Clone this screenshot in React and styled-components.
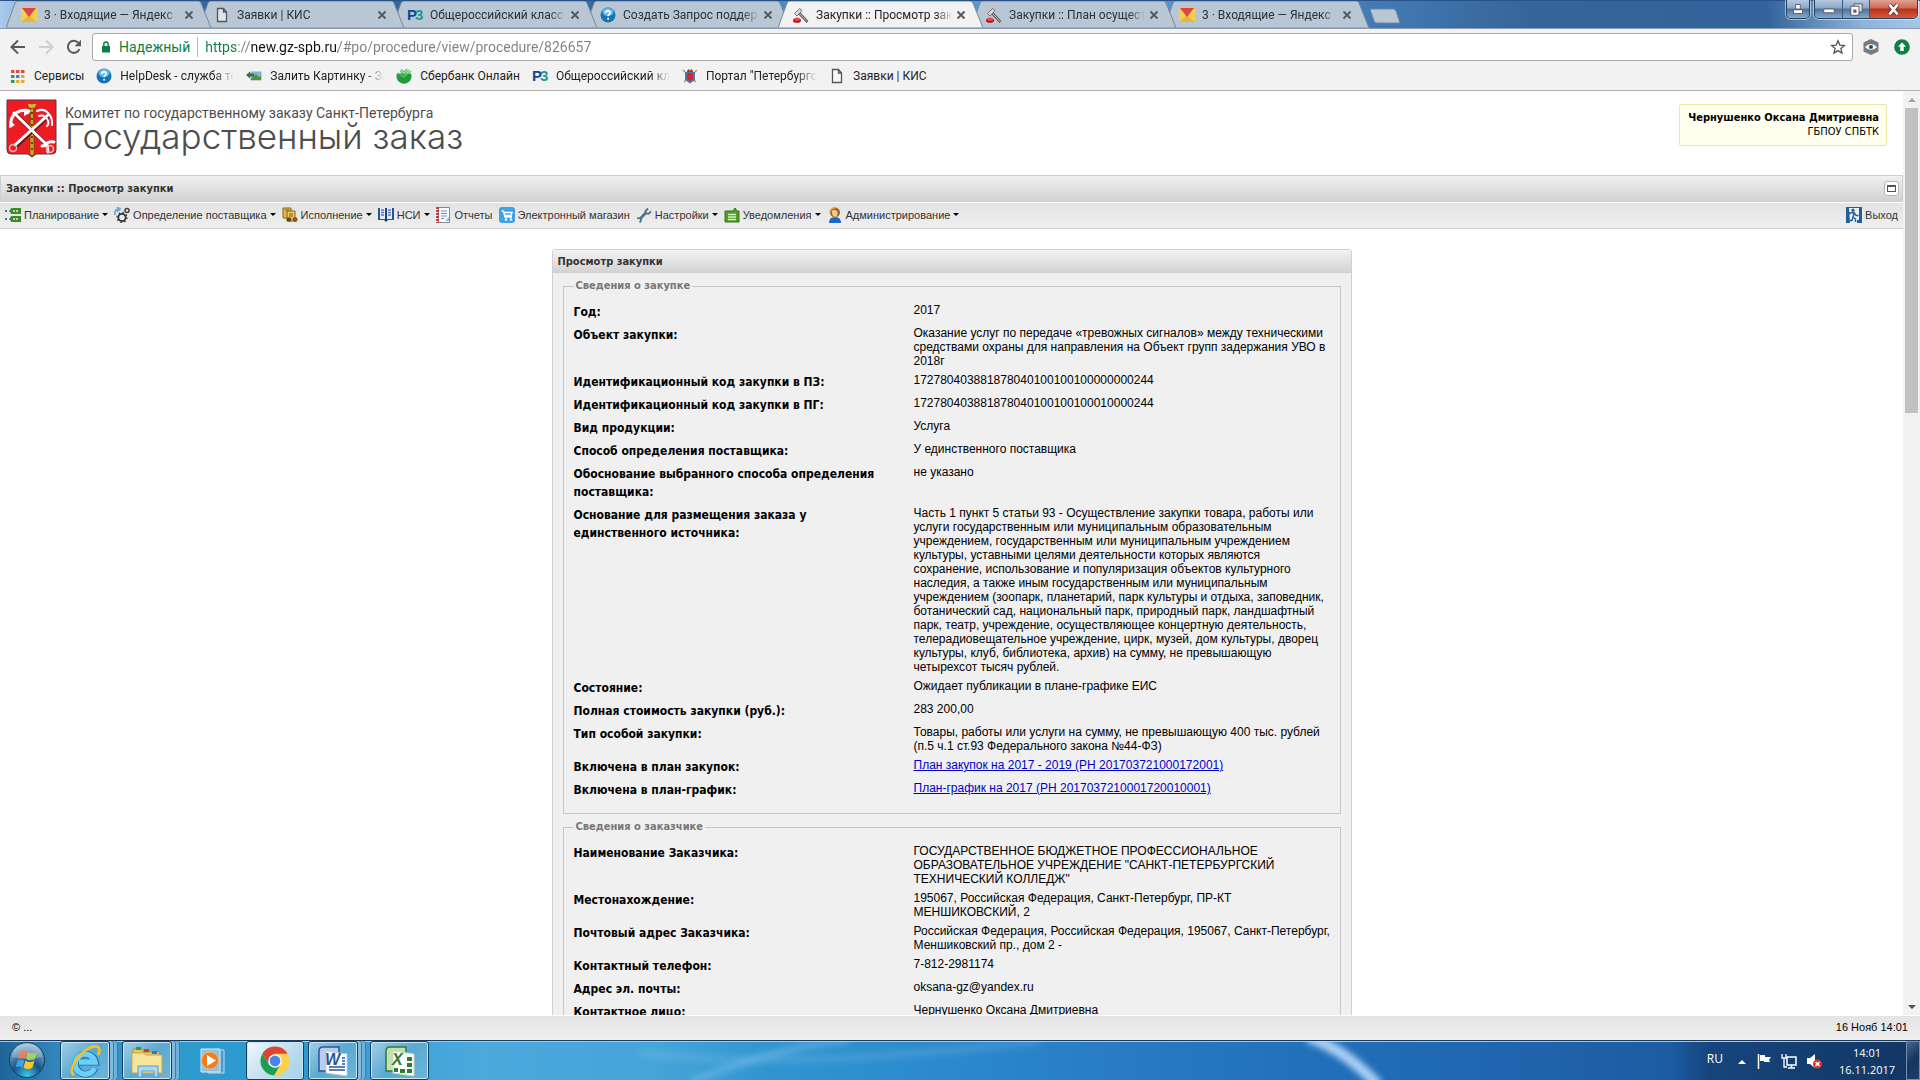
import React from "react";
import styled, { createGlobalStyle } from "styled-components";

const GlobalStyle = createGlobalStyle`
  * {
    box-sizing: border-box;
  }

  body {
    margin: 0;
    background: #fff;
    color: #000;
    font-family: "Liberation Sans", Arial, sans-serif;
  }

  button {
    border: 0;
    padding: 0;
    background: none;
    font: inherit;
    color: inherit;
  }
`;

const Screen = styled.div`
  display: flex;
  flex-direction: column;
  height: 100vh;
  overflow: hidden;
`;

/* ---------- browser window ---------- */

const TabStrip = styled.div`
  display: flex;
  align-items: flex-start;
  height: 28px;
  padding-left: 6px;
  border-top: 1px solid #27528a;
  background: linear-gradient(
    90deg,
    #a9caec 0,
    #7fa9d6 2%,
    #2f64a2 11%,
    #33689f 30%,
    #5c9bd3 46%,
    #5694cd 60%,
    #4379b3 72%,
    #356498 80%,
    #32639b 92%,
    #8db3db 97%,
    #a5c6e8 100%
  );
`;

const TabItem = styled.div`
  position: relative;
  z-index: ${({ $order }) => $order};
  display: flex;
  align-items: center;
  gap: 7px;
  width: 205px;
  height: 27px;
  margin-right: -12px;
  padding: 0 15px;
  font: 12px/16px Roboto, sans-serif;
  color: ${({ $active }) => ($active ? "#222" : "#2c3238")};
`;

const TabShape = styled.svg`
  position: absolute;
  inset: 0;
  z-index: -1;
  width: 100%;
  height: 100%;
`;

const FadeText = styled.span`
  flex: 1;
  margin-right: -5px;
  overflow: hidden;
  white-space: nowrap;
  mask-image: linear-gradient(90deg, #000 calc(100% - 16px), transparent);
`;

const CloseButton = styled.button`
  display: flex;
  width: 14px;
  height: 14px;
  align-items: center;
  justify-content: center;
`;

const NewTab = styled.button`
  width: 32px;
  height: 16px;
  margin: 7px 0 0 12px;
`;

const WindowControls = styled.div`
  display: flex;
  gap: 4px;
  margin: -1px 2px 0 auto;
`;

const ControlGroup = styled.div`
  display: flex;
  border: 1px solid #27425f;
  border-top: 0;
  border-radius: 0 0 5px 5px;
  overflow: hidden;
  box-shadow: 0 0 0 1px rgba(255, 255, 255, 0.5);
`;

const ControlButton = styled.button`
  display: flex;
  align-items: center;
  justify-content: center;
  width: ${({ $width }) => $width}px;
  height: 18px;
  border-right: 1px solid #3a5a7e;
  background: ${({ $danger }) =>
    $danger
      ? "linear-gradient(#dfa193, #cf6a55 45%, #b8301a 50%, #d8583a)"
      : "linear-gradient(#b5c9de, #8aa6c4 45%, #4f7199 50%, #86a9cd)"};

  &:last-child {
    border-right: 0;
  }
`;

const AddressBar = styled.div`
  display: flex;
  align-items: center;
  height: 37px;
  padding: 0 10px;
  border-top: 1px solid #8a9bb0;
  background: #f2f2f2;
`;

const NavButton = styled.button`
  display: flex;
  width: 28px;
  height: 24px;
  align-items: center;
  justify-content: center;
  margin-left: ${({ $pull }) => ($pull ? "-6px" : "0")};
`;

const Omnibox = styled.div`
  display: flex;
  flex: 1;
  align-items: center;
  height: 28px;
  margin-left: 4px;
  padding: 0 6px 0 7px;
  border: 1px solid #a9a9a9;
  border-radius: 3px;
  background: #fff;
  font: 14px/20px Roboto, sans-serif;
`;

const Secure = styled.span`
  margin-left: 7px;
  padding-right: 7px;
  border-right: 1px solid #b8b8b8;
  color: #0b8043;
`;

const UrlInput = styled.input`
  flex: 1;
  min-width: 0;
  margin-left: 7px;
  padding: 0;
  border: 0;
  outline: 0;
  font: inherit;
  color: transparent;
  background: linear-gradient(90deg, #0b8043 32px, #808080 32px, #808080 46px, #111 46px, #111 133px, #808080 133px);
  background-clip: text;
`;

const Extensions = styled.div`
  display: flex;
  gap: 15px;
  margin-left: 10px;
`;

const Bookmarks = styled.nav`
  display: flex;
  gap: 12px;
  height: 26px;
  padding: 0 10px 4px;
  align-items: center;
  border-bottom: 1px solid #b1b1b1;
  background: #f2f2f2;
  font: 12px/16px Roboto, sans-serif;
`;

const Bookmark = styled.a`
  display: flex;
  align-items: center;
  gap: 8px;
  color: #222;
  text-decoration: none;
`;

const BookmarkText = styled.span`
  max-width: 114px;
  overflow: hidden;
  white-space: nowrap;
  mask-image: ${({ $cut }) => ($cut ? "linear-gradient(90deg, #000 calc(100% - 20px), transparent)" : "none")};
`;

const LogoMark = styled.span`
  width: 16px;
  font: bold 15px/16px "Liberation Sans", Arial, sans-serif;
  color: #0d47a1;

  b {
    margin-left: -2px;
    color: #1c9a8e;
  }
`;

/* ---------- site ---------- */

const Viewport = styled.div`
  display: flex;
  flex: 1;
  min-height: 0;
  margin-bottom: 1px;
`;

const Site = styled.div`
  flex: 1;
  min-width: 0;
  overflow: hidden;
`;

const ScrollTrack = styled.div`
  display: flex;
  flex-direction: column;
  align-items: center;
  width: 17px;
  background: #f1f1f1;
`;

const ScrollArrow = styled.button`
  display: flex;
  width: 17px;
  height: 17px;
  align-items: center;
  justify-content: center;
`;

const ScrollThumb = styled.div`
  width: 13px;
  height: 33%;
  margin-bottom: auto;
  background: #c1c1c1;
`;

const Header = styled.header`
  display: flex;
  justify-content: space-between;
  height: 84px;
  padding: 8px 16px 0 6px;
`;

const Brand = styled.div`
  display: flex;
  gap: 7px;
`;

const BrandText = styled.div`
  padding-top: 4px;
  color: #4d4d4d;
`;

const Department = styled.div`
  font: 14px/20px Roboto, sans-serif;
`;

const SiteName = styled.div`
  font: 300 35px/32px Inter, sans-serif;
  margin-top: -3px;
`;

const UserBox = styled.div`
  height: 42px;
  margin-top: 5px;
  padding: 6px 7px 6px 8px;
  border: 1px solid #ebe6a6;
  border-radius: 2px;
  background: #fffff0;
  font: 11px/14px "DejaVu Sans Condensed", sans-serif;
  text-align: right;
`;

const PageTitle = styled.div`
  display: flex;
  justify-content: space-between;
  align-items: center;
  height: 27px;
  padding: 0 3px 0 5px;
  border: 1px solid #cfcfcf;
  background: linear-gradient(#f1f1f1, #d1d1d1);
  color: #333;
  font: bold 11px/15px "DejaVu Sans Condensed", sans-serif;
`;

const CollapseButton = styled.button`
  display: flex;
  align-items: center;
  justify-content: center;
  width: 15px;
  height: 15px;
  border: 1px solid #b5b5b5;
  border-radius: 3px;
  background: #fff;

  span {
    width: 9px;
    height: 7px;
    border: 1px solid #555;
    border-top-width: 2px;
  }
`;

const MenuBar = styled.nav`
  display: flex;
  align-items: center;
  gap: 6px;
  height: 27px;
  padding: 0 5px 2px;
  border-top: 1px solid #fff;
  border-bottom: 1px solid #cfcfcf;
  background: linear-gradient(#e3e3e3, #efefef);
`;

const MenuButton = styled.button`
  display: flex;
  align-items: center;
  gap: 3px;
  margin-left: ${({ $end }) => ($end ? "auto" : "0")};
  color: #333;
  font-size: 11px;
  line-height: 16px;
`;

const Caret = styled.span`
  border: 3px solid transparent;
  border-top-color: #000;
  border-bottom: 0;
`;

const Panel = styled.section`
  width: 800px;
  margin: 20px auto 0;
  border: 1px solid #d0d0d0;
  border-radius: 3px 3px 0 0;
  background: #f0f0f0;
`;

const PanelTitle = styled.h1`
  margin: 0;
  padding: 5px 5px 3px;
  border-bottom: 1px solid #d0d0d0;
  background: linear-gradient(#f3f3f3, #d3d3d3);
  color: #333;
  font: bold 11px/14px "DejaVu Sans Condensed", sans-serif;
`;

const Group = styled.fieldset`
  margin: 7px 10px;
  padding: 11px 8px 9px 10px;
  border: 1px solid #c6c6c6;
`;

const Legend = styled.legend`
  padding: 0 2px;
  color: #777;
  font: bold 11px/12px "DejaVu Sans Condensed", sans-serif;
`;

const Fields = styled.dl`
  display: grid;
  grid-template-columns: 320px 1fr;
  gap: 5px 20px;
  margin: 0;
  padding-bottom: 5px;

  dt {
    font: bold 12px/18px "DejaVu Sans Condensed", sans-serif;
  }

  dd {
    margin: 0;
    font-size: 12px;
    line-height: 14px;
  }

  a {
    color: #0000cc;
  }
`;

const StatusBar = styled.footer`
  display: flex;
  justify-content: space-between;
  height: 24px;
  padding: 0 12px;
  background: linear-gradient(#e4e4e4, #eeeeee);
  font-size: 11px;
  line-height: 23px;
`;

/* ---------- desktop ---------- */

const Taskbar = styled.div`
  position: relative;
  display: flex;
  align-items: stretch;
  height: 40px;
  border-top: 1px solid #1b3a5c;
  box-shadow: inset 0 1px 0 #a8c8e4;
  background: linear-gradient(
    90deg,
    #1f6498 0,
    #3386bd 3%,
    #2e9ace 8%,
    #2c9bd0 16%,
    #4ba9dc 25%,
    #45a5d8 34%,
    #3095cf 40%,
    #2b88cc 50%,
    #2779c4 60%,
    #2170ba 68%,
    #1f64ad 80%,
    #1c5ca2 87%,
    #16457d 89%,
    #123663 100%
  );
`;

const LightStreaks = styled.svg`
  position: absolute;
  inset: 0;
  width: 100%;
  height: 100%;
`;

const Task = styled.button`
  position: relative;
  display: flex;
  align-items: center;
  justify-content: center;
  width: ${({ $width }) => $width}px;
  margin-right: ${({ $stack }) => ($stack ? 12 : 4)}px;
  border: ${({ $plain }) => ($plain ? "0" : "1px solid #14405f")};
  border-radius: 3px;
  background: ${({ $plain, $active }) =>
    $plain
      ? "none"
      : $active
        ? "linear-gradient(135deg, #f2f9fd, #b9dcef 60%, #a5d2ea)"
        : "linear-gradient(135deg, #a3cfe5, #5aa9d2 50%, #6cb5da)"};
  box-shadow: ${({ $plain, $stack }) =>
    $plain
      ? "none"
      : $stack
        ? "inset 0 0 0 1px #c9e4f2, 3px 0 0 #7fbbdc, 4px 0 0 #3d7ea6, 7px 0 0 #6fb1d6, 8px 0 0 #3d7ea6"
        : "inset 0 0 0 1px #c9e4f2"};
`;

const StartButton = styled.button`
  position: relative;
  width: 60px;
  padding-left: 8px;
  text-align: left;
`;

const Tray = styled.div`
  position: relative;
  display: flex;
  align-items: center;
  gap: 9px;
  margin-left: auto;
  color: #fff;
  font: 12px/17px "Open Sans", sans-serif;
`;

const Language = styled.span`
  margin-right: 5px;
  padding-bottom: 4px;
`;

const Clock = styled.time`
  width: 78px;
  margin-left: -3px;
  font-size: 11px;
  text-align: center;
`;

const ShowDesktop = styled.button`
  align-self: stretch;
  width: 14px;
  margin-left: -9px;
  border: 1px solid #6f8fb3;
  background: linear-gradient(135deg, #45678f, #16355c 50%, #1d4069);
`;

/* ---------- icons ---------- */

const Icon = ({ size = 16, box = "0 0 16 16", children }) => (
  <svg width={size} height={size} viewBox={box} fill="none" aria-hidden="true" style={{ flex: "none" }}>
    {children}
  </svg>
);

const MailIcon = () => (
  <Icon>
    <path d="M0 1h16v14H0z" fill="#f3cf53" />
    <path d="M0 15 8 8l8 7z" fill="#e6b93c" />
    <path d="M1 1h14L8 10z" fill="#e0443c" />
  </Icon>
);

const DocIcon = () => (
  <Icon>
    <path d="M3.500 1.500h6l3 3.500v9.500h-9z" fill="#fff" fillOpacity=".5" stroke="#555" strokeWidth="1.300" />
    <path d="M9.500 1.500V5h3" stroke="#555" strokeWidth="1.300" />
  </Icon>
);

const HelpIcon = () => (
  <Icon>
    <circle cx="8" cy="8" r="7.500" fill="#1673b8" />
    <ellipse cx="8" cy="5" rx="5.500" ry="4" fill="#69bdea" />
    <path d="M5.800 6c.2-3 4.800-2.600 4.300 0-.2 1.200-2 1.500-2 3.200" stroke="#fff" strokeWidth="1.600" />
    <circle cx="8.100" cy="11.700" r="1" fill="#fff" />
  </Icon>
);

const GavelIcon = () => (
  <Icon>
    <path d="m6 6 8.500 9" stroke="#555" strokeWidth="2.600" />
    <path d="m6 6 8 8.500" stroke="#ccc" strokeWidth="1" />
    <path d="m1.500 6.500 5-5 2.500 2-5 5.500z" fill="#d9d9d9" stroke="#666" strokeWidth=".9" />
    <ellipse cx="4" cy="13.500" rx="4" ry="2.300" fill="#b3121c" />
    <ellipse cx="4" cy="12.200" rx="3" ry="1.700" fill="#ec4650" />
  </Icon>
);

const CrossIcon = () => (
  <Icon size={10} box="0 0 10 10">
    <path d="m1.500 1.500 7 7m0-7-7 7" stroke="#505860" strokeWidth="1.800" />
  </Icon>
);

const BackIcon = ({ color, flip }) => (
  <Icon>
    <path d={flip ? "M1 8h13M8 1.500 14.500 8 8 14.500" : "M15 8H2M8 1.500 1.500 8 8 14.500"} stroke={color} strokeWidth="2" />
  </Icon>
);

const ReloadIcon = () => (
  <Icon>
    <path d="M13.500 10A6 6 0 1 1 12.500 4" stroke="#5a5a5a" strokeWidth="2" />
    <path d="M15 .8v6.400H8.600z" fill="#5a5a5a" />
  </Icon>
);

const LockIcon = () => (
  <Icon size={12} box="0 0 12 12">
    <path d="M2 5h8v6.500H2z" fill="#0b8043" />
    <path d="M3.800 5V3.200a2.200 2.200 0 0 1 4.400 0V5" stroke="#0b8043" strokeWidth="1.400" />
  </Icon>
);

const StarIcon = () => (
  <Icon>
    <path d="m8 1.800 1.800 4.300 4.700.4-3.600 3 1.100 4.600-4-2.500-4 2.500 1.100-4.600-3.600-3 4.700-.4z" stroke="#555" strokeWidth="1.300" />
  </Icon>
);

const EyeIcon = () => (
  <Icon>
    <path d="m8 0 7.500 3.500v9L8 16 .5 12.500v-9z" fill="#7b7b7b" />
    <path d="M2 8q6-6 12 0-6 6-12 0z" fill="#fff" />
    <circle cx="8" cy="8" r="2.300" fill="#2f87c0" />
    <circle cx="8" cy="8" r="1" fill="#123" />
  </Icon>
);

const UpIcon = () => (
  <Icon>
    <circle cx="8" cy="8" r="7.800" fill="#0f8040" />
    <path d="m8 3.500 4 4.300H9.700V12H6.300V7.800H4z" fill="#fff" />
  </Icon>
);

const appColors = ["#dd4b3e", "#dd4b3e", "#dd4b3e", "#2f9b56", "#4a7fe0", "#e8ae1f", "#2f9b56", "#e8ae1f", "#e8ae1f"];

const AppsIcon = () => (
  <Icon>
    {appColors.map((color, i) => (
      <rect key={i} x={1 + (i % 3) * 5} y={2 + Math.floor(i / 3) * 5} width="3.500" height="3" fill={color} />
    ))}
  </Icon>
);

const PictureIcon = () => (
  <Icon>
    <path d="M5 4h10v8H5z" fill="#7fb4e3" stroke="#9ab" />
    <path d="m5 11 5-5 3 3 2-1v4H5z" fill="#4a9434" />
    <path d="M0 7 4 3.500v2h4v3H4v2z" fill="#3c6b46" />
  </Icon>
);

const SberIcon = () => (
  <Icon>
    <path d="M1 5.500h14a7.500 7.500 0 1 1-14 0z" fill="#1f9a3c" />
    <path d="m2 5 5.500 4L15 3M4 3l4 3.500L13 2M5 1.500 8 4l3-3" stroke="#5fc16f" strokeWidth="1.300" />
  </Icon>
);

const CrestIcon = () => (
  <Icon>
    <path d="m1 2 13 12M15 2 2 14" stroke="#b89a50" strokeWidth="1.500" />
    <path d="M3 4h10v8l-5 3.500L3 12z" fill="#4b78a8" />
    <path d="M5 5h6v6l-3 2-3-2z" fill="#d1262d" />
    <path d="m5 3 1.500-2L8 2.500 9.500 1 11 3v1H5z" fill="#a63a22" />
  </Icon>
);

const Logo = () => (
  <svg width="52" height="60" viewBox="0 0 52 60" aria-hidden="true">
    <path d="M1 1h49v50q0 4-4 4H30l-4 3-4-3H5q-4 0-4-4z" fill="#ed1c24" stroke="#5d3434" />
    <path d="M24.500 9h3l.7 46-2.200 2-2.200-2z" fill="#d6a520" stroke="#5b3c08" strokeWidth=".7" />
    <path d="M21 4q5 2 10 0l-2 5h-6z" fill="#e0b32c" stroke="#5b3c08" strokeWidth=".5" />
    <path d="M26 13v42" stroke="#3f2c08" strokeDasharray="2 4" strokeWidth="1.500" />
    <g stroke="#6b1c1c" strokeWidth="4.500" strokeLinecap="round">
      <path d="m10 16 31 30M42 17 10 47" />
    </g>
    <g stroke="#fff" fill="none" strokeWidth="3" strokeLinecap="round">
      <path d="m8 14 32 31M42 16 9 46" />
      <path d="M5 27q-1-9 5-13 6-4 13-2" />
      <path d="M36 47q4 0 5-3 3-2 7-1M41 45l1 8" />
      <path d="M31 12q7-3 11 2 5 5 4 12M33 17q5-2 8 3 3 4 0 7" strokeWidth="2" />
    </g>
    <g stroke="#f6b7b7" strokeWidth="1.500" fill="none">
      <circle cx="7" cy="49" r="3.500" />
      <circle cx="44" cy="50" r="3.500" />
    </g>
    <path d="m3 29 1-7 5 4zM24 14l-6-4v7z" fill="#fff" />
  </svg>
);

const PlanIcon = () => (
  <Icon>
    <path d="M0 3h2v2H0zM0 11h2v2H0z" fill="#3c78b8" />
    <path d="m4 4 2.500-3H16v6H6.500zM4 12l2.500-3H16v6H6.500z" fill="#3d8a2c" />
    <path d="M8 4h6M8 12h6" stroke="#b5dca0" strokeWidth="1.800" strokeDasharray="2 1" />
  </Icon>
);

const GearsIcon = () => (
  <Icon>
    <path d="M1 8q-1-5 4-6M3 0l3 2-3 2.500" stroke="#68a9cf" strokeWidth="1.800" />
    <circle cx="8" cy="10.500" r="3.700" stroke="#333" strokeWidth="1.800" />
    <circle cx="8" cy="10.500" r="5" stroke="#333" strokeDasharray="1.500 2.400" strokeWidth="1.300" />
    <circle cx="13" cy="3.500" r="2" stroke="#444" strokeWidth="1.600" />
  </Icon>
);

const ExecIcon = () => (
  <Icon>
    <path d="M1 1h8v10H1z" fill="#e2b84a" stroke="#886516" />
    <path d="M5 4h8v10H5z" fill="#edca64" stroke="#886516" />
    <path d="M3 3h4M7 7h4M7 9h4" stroke="#7a5b14" />
    <circle cx="7" cy="12.500" r="2.300" fill="#6f4318" />
    <circle cx="13" cy="12.500" r="2.500" fill="#8a5a24" />
  </Icon>
);

const BookIcon = () => (
  <Icon>
    <path d="M0 1h16v12h-6l-2 2-2-2H0z" fill="#1d5c86" />
    <path d="M2 1h5v11H2zM9 1h5v11H9z" fill="#e7ecfb" />
    <path d="M3 3h3M3 5.500h3M3 8h3M10 3h3M10 5.500h3M10 8h3" stroke="#6c67c9" strokeWidth="1.300" />
    <path d="M8 1v13" stroke="#123f63" strokeWidth="1.500" />
  </Icon>
);

const ReportIcon = () => (
  <Icon>
    <path d="M2.500.5h11v15h-11z" fill="#fff" stroke="#888" />
    <path d="M1.500 0v16" stroke="#c8202b" strokeWidth="2.500" strokeDasharray="2 1" />
    <path d="M5 4h6M5 6.500h6M5 9h6M5 11.500h3" stroke="#5a8fc5" />
    <path d="m9 14 4-4v4z" fill="#9cbbd9" />
  </Icon>
);

const CartIcon = () => (
  <Icon>
    <rect width="16" height="16" rx="3" fill="#41a0ea" />
    <path d="M2.500 4h2L6 10h7M5 5.500h8L12 8.500H6" stroke="#fff" strokeWidth="1.400" />
    <circle cx="7" cy="12.500" r="1.200" fill="#fff" />
    <circle cx="12" cy="12.500" r="1.200" fill="#fff" />
  </Icon>
);

const WrenchIcon = () => (
  <Icon>
    <path d="m4 12 6-6.500" stroke="#4d7390" strokeWidth="2.600" />
    <path d="M12 1.500 9.500 4l.5 2.500 2.500.3L15 4.500" stroke="#4d7390" strokeWidth="1.800" />
    <path d="M1 11.500q3-1 4 1 0 2-1.500 3" stroke="#4d7390" strokeWidth="1.800" />
  </Icon>
);

const NoticeIcon = () => (
  <Icon>
    <path d="M1 4h8l2-3 2 3h2v11H1z" fill="#4f9c2b" stroke="#347418" />
    <path d="M4 7.500h8M4 10h8M4 12.500h8" stroke="#d8efc6" strokeWidth="1.300" />
  </Icon>
);

const UserIcon = () => (
  <Icon>
    <path d="M2 16q0-6 6-6t6 6z" fill="#1767c4" />
    <circle cx="8" cy="5.500" r="5" fill="#9a6526" />
    <path d="M5 3.500q5.500-1.500 5.500 2.500T8 10Q4.500 9 5 3.500z" fill="#f6c98b" />
    <path d="M3 6q0-5 5-5" stroke="#e0a54a" strokeWidth="1.500" />
  </Icon>
);

const ExitIcon = () => (
  <Icon>
    <path d="M0 0h16v16H0z" fill="#245f93" />
    <path d="M3 1h10v12h-2v3H4z" fill="#e9f1f7" />
    <circle cx="7" cy="3.200" r="1.600" fill="#245f93" />
    <path d="M3.500 7.500V6L8 5.500l2 3h2.500M8 6 7 10l2.500 2v3M7 10l-1 3.500H3.500" stroke="#245f93" strokeWidth="1.400" />
  </Icon>
);

const StartIcon = () => (
  <svg width="38" height="38" viewBox="0 0 38 38" aria-hidden="true">
    <defs>
      <radialGradient id="orb" cx=".5" cy=".95" r=".9">
        <stop offset="0" stopColor="#3ccbe8" />
        <stop offset=".45" stopColor="#12558a" />
        <stop offset="1" stopColor="#9ab8d0" />
      </radialGradient>
    </defs>
    <circle cx="19" cy="19" r="17.500" fill="url(#orb)" stroke="#123e63" />
    <path d="M12 11q4-3 7 0l-2 7q-4-2-7 0z" fill="#ee5a24" />
    <path d="M20 11q4 3 9 0l-2 7q-5 3-9 0z" fill="#8cc43c" />
    <path d="M9.500 19.500q4-2 7 0l-2 7q-4-2-7 0z" fill="#3fa0e4" />
    <path d="M17.500 19.500q4 3 9 0l-2 7q-5 3-9 0z" fill="#fbc62c" />
    <path d="M4 16q2-13 15-13t15 13q-15 4-30 0z" fill="#fff" fillOpacity=".22" />
  </svg>
);

const IeIcon = () => (
  <Icon size={34} box="0 0 34 34">
    <path d="M27 24A10 10 0 1 1 27.500 18H11" stroke="#1571b5" strokeWidth="6.800" />
    <path d="M26.500 24A10 10 0 1 1 27 18H11" stroke="#6fd0f7" strokeWidth="5.400" />
    <path d="M6 31C-3 26 18-2 30 3q3 2 0 8" stroke="#f2c31e" strokeWidth="2.600" />
  </Icon>
);

const FolderIcon = () => (
  <Icon size={34} box="0 0 34 34">
    <path d="M3 5h10v3h16v6H3z" fill="#e7c765" stroke="#b8963a" />
    <path d="M6 3h5v3H6z" fill="#2d9b47" />
    <path d="M14 5h5v3h-5z" fill="#d63a2d" />
    <path d="M22 7h5v3h-5z" fill="#3078c8" />
    <path d="M2 9h12l2 2h16v18H2z" fill="#f8e39b" stroke="#c9a94c" />
    <path d="M8 33V22h20v11h-4v-6H12v6z" fill="#a9d8f0" stroke="#5a9cc4" />
  </Icon>
);

const PlayerIcon = () => (
  <Icon size={28} box="0 0 28 28">
    <path d="M9 3h16v23H9z" fill="#4d9cc9" stroke="#b9dced" />
    <path d="M2 2h19v23H2z" fill="#8dc3e1" stroke="#d9edf6" />
    <circle cx="11" cy="13.500" r="8.500" fill="#ef7d1e" stroke="#f9b377" />
    <path d="m8 8 9 5.500L8 19z" fill="#fff" />
  </Icon>
);

const ChromeIcon = () => (
  <Icon size={30} box="0 0 30 30">
    <circle cx="15" cy="15" r="14.500" fill="#fbd04b" />
    <path d="M2.400 7.800A14.500 14.500 0 0 1 27.600 7.800H15L9 18.500z" fill="#dc4436" />
    <path d="M2.400 7.800A14.500 14.500 0 0 0 14 29.500l6.500-11L9 18.500z" fill="#1a9f5a" />
    <circle cx="15" cy="15" r="6.800" fill="#fff" />
    <circle cx="15" cy="15" r="5.400" fill="#4a84ee" />
  </Icon>
);

const OfficeIcon = ({ color, light, letter, grid }) => (
  <Icon size={32} box="0 0 32 32">
    <path d="M2 6q0-4 4-4h16v24H2z" fill={light} stroke={color} strokeWidth="1.500" />
    <path d="m9 6 21 3v22L9 28z" fill="#fff" stroke={light} />
    {grid ? (
      <path d="M23 12h5v4h-5zM23 18h5v4h-5zM23 24h5v4h-5zM16 24h5v4h-5zM10 23h4v4h-4z" fill={color} />
    ) : (
      <path d="M25 13h3M25 16h3M25 19h3M12 22h16M12 25h16" stroke={color} strokeWidth="1.500" />
    )}
    <text x="8" y="20" fontSize="16" fontWeight="bold" fontStyle="italic" fontFamily="Liberation Sans" fill={color}>
      {letter}
    </text>
  </Icon>
);

/* ---------- data ---------- */

const tabs = [
  { icon: <MailIcon />, title: "3 · Входящие — Яндекс" },
  { icon: <DocIcon />, title: "Заявки | КИС" },
  { icon: <LogoMark>P<b>3</b></LogoMark>, title: "Общероссийский класс" },
  { icon: <HelpIcon />, title: "Создать Запрос поддер" },
  { icon: <GavelIcon />, title: "Закупки :: Просмотр зак", active: true },
  { icon: <GavelIcon />, title: "Закупки :: План осущест" },
  { icon: <MailIcon />, title: "3 · Входящие — Яндекс" },
];

const bookmarks = [
  { icon: <AppsIcon />, title: "Сервисы" },
  { icon: <HelpIcon />, title: "HelpDesk - служба те", cut: true },
  { icon: <PictureIcon />, title: "Залить Картинку - За", cut: true },
  { icon: <SberIcon />, title: "Сбербанк Онлайн" },
  { icon: <LogoMark>P<b>3</b></LogoMark>, title: "Общероссийский кл", cut: true },
  { icon: <CrestIcon />, title: "Портал \"Петербургс", cut: true },
  { icon: <DocIcon />, title: "Заявки | КИС" },
];

const menu = [
  { icon: <PlanIcon />, title: "Планирование", caret: true },
  { icon: <GearsIcon />, title: "Определение поставщика", caret: true },
  { icon: <ExecIcon />, title: "Исполнение", caret: true },
  { icon: <BookIcon />, title: "НСИ", caret: true },
  { icon: <ReportIcon />, title: "Отчеты" },
  { icon: <CartIcon />, title: "Электронный магазин" },
  { icon: <WrenchIcon />, title: "Настройки", caret: true },
  { icon: <NoticeIcon />, title: "Уведомления", caret: true },
  { icon: <UserIcon />, title: "Администрирование", caret: true },
];

const groups = [
  {
    title: "Сведения о закупке",
    fields: [
      ["Год:", "2017"],
      [
        "Объект закупки:",
        "Оказание услуг по передаче «тревожных сигналов» между техническими средствами охраны для направления на Объект групп задержания УВО в 2018г",
      ],
      ["Идентификационный код закупки в ПЗ:", "172780403881878040100100100000000244"],
      ["Идентификационный код закупки в ПГ:", "172780403881878040100100100010000244"],
      ["Вид продукции:", "Услуга"],
      ["Способ определения поставщика:", "У единственного поставщика"],
      ["Обоснование выбранного способа определения поставщика:", "не указано"],
      [
        "Основание для размещения заказа у единственного источника:",
        "Часть 1 пункт 5 статьи 93 - Осуществление закупки товара, работы или услуги государственным или муниципальным образовательным учреждением, государственным или муниципальным учреждением культуры, уставными целями деятельности которых являются сохранение, использование и популяризация объектов культурного наследия, а также иным государственным или муниципальным учреждением (зоопарк, планетарий, парк культуры и отдыха, заповедник, ботанический сад, национальный парк, природный парк, ландшафтный парк, театр, учреждение, осуществляющее концертную деятельность, телерадиовещательное учреждение, цирк, музей, дом культуры, дворец культуры, клуб, библиотека, архив) на сумму, не превышающую четырехсот тысяч рублей.",
      ],
      ["Состояние:", "Ожидает публикации в плане-графике ЕИС"],
      ["Полная стоимость закупки (руб.):", "283 200,00"],
      [
        "Тип особой закупки:",
        "Товары, работы или услуги на сумму, не превышающую 400 тыс. рублей (п.5 ч.1 ст.93 Федерального закона №44-ФЗ)",
      ],
      ["Включена в план закупок:", "План закупок на 2017 - 2019 (РН 201703721000172001)", true],
      ["Включена в план-график:", "План-график на 2017 (РН 2017037210001720010001)", true],
    ],
  },
  {
    title: "Сведения о заказчике",
    fields: [
      [
        "Наименование Заказчика:",
        "ГОСУДАРСТВЕННОЕ БЮДЖЕТНОЕ ПРОФЕССИОНАЛЬНОЕ ОБРАЗОВАТЕЛЬНОЕ УЧРЕЖДЕНИЕ \"САНКТ-ПЕТЕРБУРГСКИЙ ТЕХНИЧЕСКИЙ КОЛЛЕДЖ\"",
      ],
      ["Местонахождение:", "195067, Российская Федерация, Санкт-Петербург, ПР-КТ МЕНШИКОВСКИЙ, 2"],
      [
        "Почтовый адрес Заказчика:",
        "Российская Федерация, Российская Федерация, 195067, Санкт-Петербург, Меншиковский пр., дом 2 -",
      ],
      ["Контактный телефон:", "7-812-2981174"],
      ["Адрес эл. почты:", "oksana-gz@yandex.ru"],
      ["Контактное лицо:", "Чернушенко Оксана Дмитриевна"],
    ],
  },
];

const Tab = ({ icon, title, active, order }) => (
  <TabItem $active={active} $order={order}>
    <TabShape viewBox="0 0 205 27" preserveAspectRatio="none">
      <path d="M0 27 9 2q1-2 3-2h180q2 0 3 2l10 25z" fill={active ? "#f2f2f2" : "#b9c6d3"} stroke="#75889d" />
    </TabShape>
    {icon}
    <FadeText>{title}</FadeText>
    <CloseButton aria-label="Закрыть">
      <CrossIcon />
    </CloseButton>
  </TabItem>
);

const App = () => {
  return (
    <Screen>
      <GlobalStyle />
      <TabStrip>
        {tabs.map((tab, index) => (
          <Tab key={index} {...tab} order={tab.active ? 10 : tabs.length - index} />
        ))}
        <NewTab aria-label="Новая вкладка">
          <svg width="32" height="16" viewBox="0 0 32 16">
            <path d="M1 1h23q2 0 3 2l4 12H8q-2 0-3-2z" fill="#b9c6d3" stroke="#6d87a5" />
          </svg>
        </NewTab>
        <WindowControls>
          <ControlGroup>
            <ControlButton $width={22} aria-label="Профиль">
              <Icon size={12}>
                <path d="M5 2h6v6H5zM2 14V9h12v5z" fill="#fff" stroke="#445" />
              </Icon>
            </ControlButton>
          </ControlGroup>
          <ControlGroup>
            <ControlButton $width={28} aria-label="Свернуть">
              <Icon size={12}>
                <path d="M1 8h14v5H1z" fill="#fff" stroke="#445" />
              </Icon>
            </ControlButton>
            <ControlButton $width={27} aria-label="Развернуть">
              <Icon size={13}>
                <path d="M5 1h10v10H5z" fill="#ddd" stroke="#445" />
                <path d="M1 4h10v11H1z" fill="#fff" stroke="#445" />
                <path d="M4 8h4v4H4z" fill="#567" />
              </Icon>
            </ControlButton>
            <ControlButton $width={47} $danger aria-label="Закрыть окно">
              <Icon size={13}>
                <path d="m3 2 10 12M13 2 3 14" stroke="#533" strokeWidth="5" />
                <path d="m3 2 10 12M13 2 3 14" stroke="#fff" strokeWidth="3" />
              </Icon>
            </ControlButton>
          </ControlGroup>
        </WindowControls>
      </TabStrip>

      <AddressBar>
        <NavButton $pull aria-label="Назад">
          <BackIcon color="#5a5a5a" />
        </NavButton>
        <NavButton aria-label="Вперед">
          <BackIcon color="#cfcfcf" flip />
        </NavButton>
        <NavButton aria-label="Обновить">
          <ReloadIcon />
        </NavButton>
        <Omnibox>
          <LockIcon />
          <Secure>Надежный</Secure>
          <UrlInput aria-label="Адрес" defaultValue="https://new.gz-spb.ru/#po/procedure/view/procedure/826657" />
          <StarIcon />
        </Omnibox>
        <Extensions>
          <EyeIcon />
          <UpIcon />
        </Extensions>
      </AddressBar>

      <Bookmarks>
        {bookmarks.map(({ icon, title, cut }) => (
          <Bookmark key={title} href="#">
            {icon}
            <BookmarkText $cut={cut}>{title}</BookmarkText>
          </Bookmark>
        ))}
      </Bookmarks>

      <Viewport>
        <Site>
          <Header>
            <Brand>
              <Logo />
              <BrandText>
                <Department>Комитет по государственному заказу Санкт-Петербурга</Department>
                <SiteName>Государственный заказ</SiteName>
              </BrandText>
            </Brand>
            <UserBox>
              <b>Чернушенко Оксана Дмитриевна</b>
              <div>ГБПОУ СПБТК</div>
            </UserBox>
          </Header>

          <PageTitle>
            Закупки :: Просмотр закупки
            <CollapseButton aria-label="Свернуть панель">
              <span />
            </CollapseButton>
          </PageTitle>

          <MenuBar>
            {menu.map(({ icon, title, caret }) => (
              <MenuButton key={title}>
                {icon}
                {title}
                {caret && <Caret />}
              </MenuButton>
            ))}
            <MenuButton $end>
              <ExitIcon />
              Выход
            </MenuButton>
          </MenuBar>

          <Panel>
            <PanelTitle>Просмотр закупки</PanelTitle>
            {groups.map((group) => (
              <Group key={group.title}>
                <Legend>{group.title}</Legend>
                <Fields>
                  {group.fields.map(([label, value, link]) => (
                    <React.Fragment key={label}>
                      <dt>{label}</dt>
                      <dd>{link ? <a href="#">{value}</a> : value}</dd>
                    </React.Fragment>
                  ))}
                </Fields>
              </Group>
            ))}
          </Panel>
        </Site>
        <ScrollTrack>
          <ScrollArrow aria-label="Вверх">
            <Icon size={8} box="0 0 8 8">
              <path d="m0 6 4-4 4 4z" fill="#a3a3a3" />
            </Icon>
          </ScrollArrow>
          <ScrollThumb />
          <ScrollArrow aria-label="Вниз">
            <Icon size={8} box="0 0 8 8">
              <path d="m0 2 4 4 4-4z" fill="#505050" />
            </Icon>
          </ScrollArrow>
        </ScrollTrack>
      </Viewport>

      <StatusBar>
        <span>© ...</span>
        <span>16 Нояб 14:01</span>
      </StatusBar>

      <Taskbar>
        <LightStreaks viewBox="0 0 1920 39" preserveAspectRatio="none">
          <defs>
            <filter id="soft">
              <feGaussianBlur stdDeviation="3" />
            </filter>
          </defs>
          <g filter="url(#soft)" fill="none" stroke="#b9dcff">
            <path d="M1308-4q36 12 70 48" strokeWidth="11" strokeOpacity=".9" />
            <path d="M690 42q70-32 160-44" strokeWidth="8" strokeOpacity=".25" />
            <path d="M640 12q150 18 400-12" strokeWidth="8" strokeOpacity=".15" />
          </g>
        </LightStreaks>
        <StartButton aria-label="Пуск">
          <StartIcon />
        </StartButton>
        <Task $width={50} $stack aria-label="Internet Explorer">
          <IeIcon />
        </Task>
        <Task $width={50} $stack aria-label="Проводник">
          <FolderIcon />
        </Task>
        <Task $width={58} $plain aria-label="Проигрыватель">
          <PlayerIcon />
        </Task>
        <Task $width={58} $active aria-label="Chrome">
          <ChromeIcon />
        </Task>
        <Task $width={50} $stack aria-label="Word">
          <OfficeIcon color="#2a5699" light="#b9cdec" letter="W" />
        </Task>
        <Task $width={59} aria-label="Excel">
          <OfficeIcon color="#2f7a35" light="#c3e0b5" letter="X" grid />
        </Task>
        <Tray>
          <Language>RU</Language>
          <Icon size={10} box="0 0 10 10">
            <path d="m1 8 4-4 4 4z" fill="#fff" />
          </Icon>
          <Icon>
            <path d="M2.500 1v15" stroke="#fff" strokeWidth="1.500" />
            <path d="M4 2h5v2h6l-2 3 1 2H8V8H4z" fill="#fff" />
          </Icon>
          <Icon>
            <path d="M6 4h9v8H6zM10.500 12v2.500M7 15h7" stroke="#fff" strokeWidth="1.500" />
            <path d="M1 1v4h4V1M3 5v9h3" stroke="#fff" strokeWidth="1.300" />
          </Icon>
          <Icon>
            <path d="M1 5h3l5-4v14l-5-4H1z" fill="#fff" />
            <circle cx="11.500" cy="11" r="4.500" fill="#d8332c" />
            <path d="m9.500 9 4 4m0-4-4 4" stroke="#fff" strokeWidth="1.500" />
          </Icon>
          <Clock>
            14:01
            <br />
            16.11.2017
          </Clock>
          <ShowDesktop aria-label="Показать рабочий стол" />
        </Tray>
      </Taskbar>
    </Screen>
  );
};

export default App;
